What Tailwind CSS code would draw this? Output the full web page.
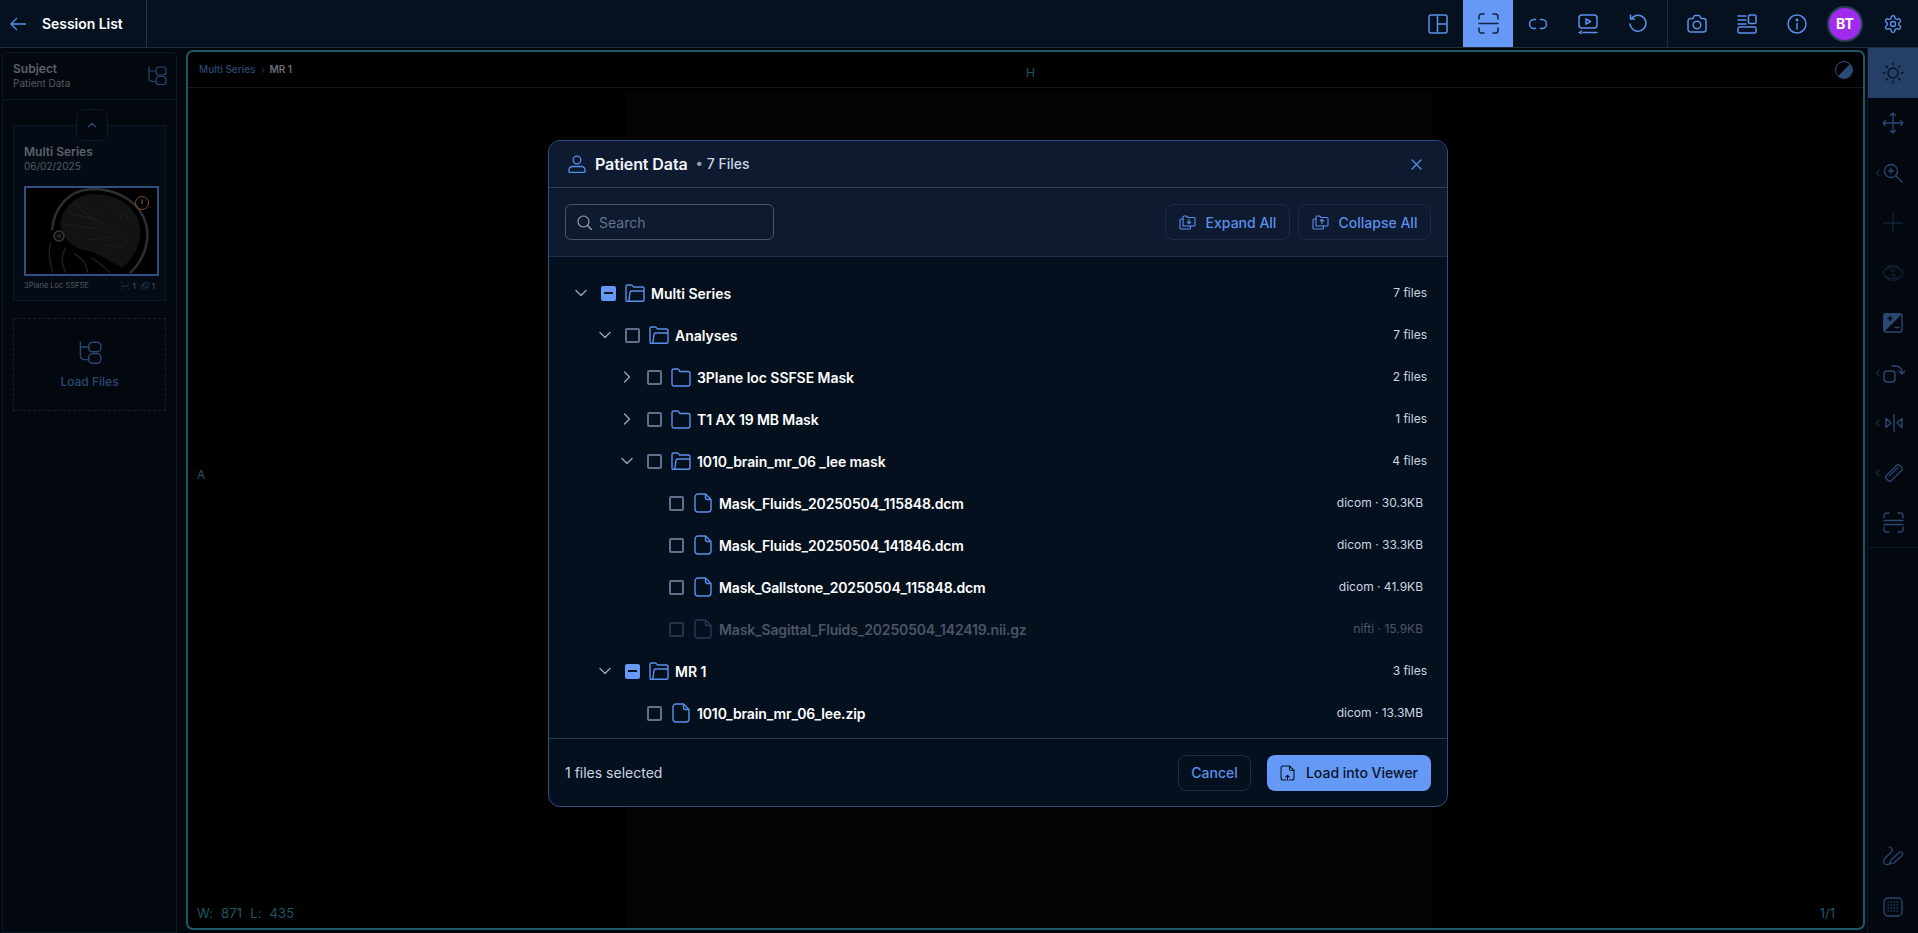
<!DOCTYPE html>
<html lang="en">
<head>
<meta charset="UTF-8" />
<title>Viewer</title>
<script src="https://cdn.jsdelivr.net/npm/@tailwindcss/browser@4"></script>
</head>
<body class="bg-black w-[1918px] h-[933px] overflow-hidden relative font-['Inter',sans-serif]">

<!-- icon sprite -->
<svg class="hidden">
  <symbol id="folder-open" viewBox="0 0 20 20" fill="none" stroke="currentColor" stroke-width="1.400" stroke-linejoin="round" stroke-linecap="round">
    <path d="M1 17V3.500A1.500 1.500 0 0 1 2.500 2h3.800c.5 0 .8.2 1.100.6L8.600 4h8.900A1.500 1.500 0 0 1 19 5.500V8"/>
    <path d="M1.200 18.200h16.300a1.500 1.500 0 0 0 1.500-1.500V9.500A1.500 1.500 0 0 0 17.500 8H6.500a1.500 1.500 0 0 0-1.500 1.300L4 16.800c-.2 1-1.300 1.400-2.800 1.400z"/>
  </symbol>
  <symbol id="folder" viewBox="0 0 20 20" fill="none" stroke="currentColor" stroke-width="1.400" stroke-linejoin="round">
    <path d="M1 4a2 2 0 0 1 2-2h3.500c.5 0 .9.2 1.200.6L9 4.500h8a2 2 0 0 1 2 2V17a2 2 0 0 1-2 2H3a2 2 0 0 1-2-2z"/>
  </symbol>
  <symbol id="file" viewBox="0 0 20 20" fill="none" stroke="currentColor" stroke-width="1.400" stroke-linejoin="round">
    <path d="M5 1h7.500L18 6.500V16a3 3 0 0 1-3 3H5a3 3 0 0 1-3-3V4a3 3 0 0 1 3-3z"/>
    <path d="M12.500 1v3.500a2 2 0 0 0 2 2H18"/>
  </symbol>
  <symbol id="chev-down" viewBox="0 0 20 20" fill="none" stroke="currentColor" stroke-width="1.400" stroke-linecap="round" stroke-linejoin="round"><path d="M5 7.500l5 5 5-5"/></symbol>
  <symbol id="chev-right" viewBox="0 0 20 20" fill="none" stroke="currentColor" stroke-width="1.400" stroke-linecap="round" stroke-linejoin="round"><path d="M7.500 5l5 5-5 5"/></symbol>
  <symbol id="chev-left" viewBox="0 0 8 12" fill="none" stroke="currentColor" stroke-width="1" stroke-linecap="round" stroke-linejoin="round"><path d="M5.500 2L2 6l3.500 4"/></symbol>
  <symbol id="tree" viewBox="0 0 20 20" fill="none" stroke="currentColor" stroke-width="1.200" stroke-linecap="round" stroke-linejoin="round">
    <path d="M2 1v11.500a3 3 0 0 0 3 3h3M2 5h6"/>
    <rect x="9" y="1" width="10" height="8" rx="3"/>
    <rect x="9" y="10.500" width="10" height="8" rx="3"/>
  </symbol>
</svg>

<!-- top bar -->
<header class="h-[48px] bg-[#05111f] border-b border-[#1c2d42] flex items-center">
  <div class="w-[147px] h-full border-r border-[#1f3350] flex items-center pl-[10px] gap-[16px] shrink-0">
    <svg class="w-[16px] h-[14px] text-[#5a8fe8]" viewBox="0 0 16 14" fill="none" stroke="currentColor" stroke-width="1.300" stroke-linecap="round" stroke-linejoin="round"><path d="M15.500 7H1M6.500 1.500L1 7l5.500 5.500"/></svg>
    <span class="text-[14px] font-semibold text-white tracking-[-0.05px]">Session List</span>
  </div>
  <div class="flex-1"></div>
  <div class="flex items-center h-full text-[#5b8fe9]">
    <button class="w-[50px] h-full flex items-center justify-center">
      <svg class="w-[20px] h-[20px]" viewBox="0 0 20 20" fill="none" stroke="currentColor" stroke-width="1.500"><rect x="1" y="1" width="18" height="18" rx="2"/><path d="M9.500 1v18M9.500 10H19"/></svg>
    </button>
    <button class="w-[50px] h-full bg-[#6699f6] flex items-center justify-center text-[#10233f]">
      <svg class="w-[21px] h-[21px]" viewBox="0 0 21 21" fill="none" stroke="currentColor" stroke-width="1.500" stroke-linecap="round" stroke-linejoin="round"><path d="M1 6V3.500A2.500 2.500 0 0 1 3.500 1H6M15 1h2.500A2.500 2.500 0 0 1 20 3.500V6M20 15v2.500a2.500 2.500 0 0 1-2.500 2.500H15M6 20H3.500A2.500 2.500 0 0 1 1 17.500V15M1 10.500h19"/></svg>
    </button>
    <button class="w-[50px] h-full flex items-center justify-center">
      <svg class="w-[20px] h-[12px]" viewBox="0 0 20 12" fill="none" stroke="currentColor" stroke-width="1.500" stroke-linecap="round"><path d="M7.500 1.500H6a4.500 4.500 0 0 0 0 9h1.500M12.500 1.500H14a4.500 4.500 0 0 1 0 9h-1.500"/></svg>
    </button>
    <button class="w-[50px] h-full flex items-center justify-center">
      <svg class="w-[20px] h-[20px]" viewBox="0 0 20 20" fill="none" stroke="currentColor" stroke-width="1.500" stroke-linecap="round" stroke-linejoin="round"><rect x="1" y="1" width="18" height="13" rx="3"/><path d="M8 4.800v5.400l4.500-2.700zM5 18.500h14M1 18.500h1.500M3.500 17l-1.500 1.500L3.500 20"/></svg>
    </button>
    <button class="w-[50px] h-full flex items-center justify-center">
      <svg class="w-[20px] h-[20px]" viewBox="0 0 20 20" fill="none" stroke="currentColor" stroke-width="1.500" stroke-linecap="round" stroke-linejoin="round"><path d="M3.500 4.500A8 8 0 1 1 2 10"/><path d="M2.500 1v4h4"/></svg>
    </button>
    <div class="w-px h-full bg-[#1c2d42] ml-[4px] mr-[4px]"></div>
    <button class="w-[50px] h-full flex items-center justify-center">
      <svg class="w-[20px] h-[19px]" viewBox="0 0 20 19" fill="none" stroke="currentColor" stroke-width="1.500" stroke-linejoin="round"><path d="M1 7a2.500 2.500 0 0 1 2.500-2.500H6L7.500 1.500h5L14 4.500h2.500A2.500 2.500 0 0 1 19 7v8.500a2.500 2.500 0 0 1-2.500 2.500h-13A2.500 2.500 0 0 1 1 15.500z"/><circle cx="10" cy="11" r="3.800"/></svg>
    </button>
    <button class="w-[50px] h-full flex items-center justify-center">
      <svg class="w-[20px] h-[20px]" viewBox="0 0 20 20" fill="none" stroke="currentColor" stroke-width="1.500" stroke-linecap="round"><path d="M1 2h8M1 6h8M1 10h8"/><rect x="11.500" y="1" width="7.500" height="8.500" rx="1.500"/><rect x="1" y="13" width="18" height="6" rx="1.500"/></svg>
    </button>
    <button class="w-[50px] h-full flex items-center justify-center">
      <svg class="w-[20px] h-[20px]" viewBox="0 0 20 20" fill="none" stroke="currentColor" stroke-width="1.500" stroke-linecap="round"><circle cx="10" cy="10" r="9"/><path d="M10 9.500V15"/><circle cx="10" cy="6" r=".7" fill="currentColor"/></svg>
    </button>
    <div class="w-[36px] h-[36px] rounded-full bg-[#a12bea] border-[2px] border-[#2a3f5a] flex items-center justify-center ml-[5px] mr-[5px] text-white text-[14px] font-bold">BT</div>
    <button class="w-[50px] h-full flex items-center justify-center">
      <svg class="w-[20px] h-[20px]" viewBox="0 0 24 24" fill="none" stroke="currentColor" stroke-width="1.700" stroke-linecap="round" stroke-linejoin="round"><path d="M12.220 2h-.440a2 2 0 0 0-2 2v.180a2 2 0 0 1-1 1.730l-.430.250a2 2 0 0 1-2 0l-.150-.080a2 2 0 0 0-2.730.730l-.220.380a2 2 0 0 0 .730 2.730l.150.100a2 2 0 0 1 1 1.720v.510a2 2 0 0 1-1 1.740l-.150.090a2 2 0 0 0-.730 2.730l.220.380a2 2 0 0 0 2.730.730l.150-.080a2 2 0 0 1 2 0l.430.250a2 2 0 0 1 1 1.730V20a2 2 0 0 0 2 2h.440a2 2 0 0 0 2-2v-.180a2 2 0 0 1 1-1.730l.430-.250a2 2 0 0 1 2 0l.150.080a2 2 0 0 0 2.730-.730l.220-.390a2 2 0 0 0-.730-2.730l-.150-.080a2 2 0 0 1-1-1.740v-.500a2 2 0 0 1 1-1.740l.150-.090a2 2 0 0 0 .730-2.730l-.220-.380a2 2 0 0 0-2.730-.730l-.150.080a2 2 0 0 1-2 0l-.430-.250a2 2 0 0 1-1-1.730V4a2 2 0 0 0-2-2z"/><circle cx="12" cy="12" r="3"/></svg>
    </button>
  </div>
</header>

<main class="h-[885px] flex bg-[#02060d]">
  <!-- left panel -->
  <aside class="w-[186px] shrink-0 pl-[2px] pt-[4px] pr-[9px]">
    <div class="h-[881px] border border-[#0d1726] rounded-t-[4px] bg-[#03080f] flex flex-col">
      <div class="h-[47px] border-b border-[#0d1726] pl-[10px] pr-[9px] pb-[1px] flex items-center justify-between shrink-0">
        <div class="leading-none">
          <div class="text-[12px] font-semibold text-[#5c6169]">Subject</div>
          <div class="text-[10px] text-[#555a62] mt-[3px]">Patient Data</div>
        </div>
        <svg class="w-[20px] h-[20px] text-[#2b4874]"><use href="#tree"/></svg>
      </div>
      <div class="relative px-[10px] pt-[25px]">
        <!-- collapse handle -->
        <div class="absolute left-[73px] top-[9px] w-[32px] h-[32px] rounded-[8px] border border-[#0e1a2b] bg-[#03080f] flex items-center justify-center text-[#2b4874] z-10">
          <svg class="w-[14px] h-[14px]" viewBox="0 0 20 20" fill="none" stroke="currentColor" stroke-width="1.800" stroke-linecap="round" stroke-linejoin="round"><path d="M5 12.500l5-5 5 5"/></svg>
        </div>
        <div class="h-[176px] border border-[#0d1726] bg-[#050b15] px-[10px] pt-[19px]">
          <div class="text-[12px] font-semibold text-[#5c6169] leading-[14px]">Multi Series</div>
          <div class="text-[10px] text-[#555a62] leading-[14px]">06/02/2025</div>
          <!-- thumbnail -->
          <div class="relative mt-[13px] w-[135px] h-[90px] border-[2px] border-[#2f4f80] bg-black overflow-hidden">
            <svg class="w-full h-full" viewBox="0 0 131 86">
              <path d="M26 42C28 20 42 2 66 1c26 0 48 13 54 35 4 14 0 34-16 49" fill="none" stroke="#2f2f2f" stroke-width="2.500"/>
              <path d="M34 36C38 16 52 6 68 6c24 0 44 14 46 34 2 14-6 30-18 40-12-6-26-18-40-18-10-4-20-12-22-26z" fill="#131313"/>
              <path d="M42 24c10 6 20 2 30 10M38 36c12 0 20 6 34 4M50 14c4 12 16 14 30 24M62 52c8-2 16 0 22-4M84 14c6 8 14 12 22 18M78 56c8 2 16 6 24-2" stroke="#1c1c1c" stroke-width="1.200" fill="none"/>
              <path d="M60 20h.8M76 24h.8M94 30h.8M52 44h.8M88 44h.8M100 48h.8M70 48h.8M82 68h.8" stroke="#3c3c3c" stroke-width="1"/>
              <circle cx="33" cy="48" r="5" fill="#0c0c0c" stroke="#3a3a3a" stroke-width="1.500"/>
              <circle cx="33" cy="48" r="1.800" fill="#2e2e2e"/>
              <path d="M25 54c-3 8-2 18 2 31M40 60c-6 8-4 18 0 25M48 66c6 2 12 8 14 19M66 70c6 4 12 8 18 15" stroke="#1e1e1e" stroke-width="1.500" fill="none"/>
              <circle cx="116" cy="15" r="6.500" fill="none" stroke="#7d5520" stroke-width="1"/>
              <path d="M116 11.500v4.500M116 18v.6" stroke="#7d5520" stroke-width="1.200"/>
            </svg>
          </div>
          <div class="flex items-center justify-between mt-[4px] text-[7.500px] text-[#555a62] leading-[12px]">
            <span>3Plane Loc SSFSE</span>
            <span class="flex items-center gap-[3px] text-[8px]">
              <svg class="w-[8px] h-[8px] text-[#24395c]" viewBox="0 0 8 8" fill="none" stroke="currentColor" stroke-width=".8"><path d="M0 2V0h2M6 0h2v2M8 6v2H6M2 8H0V6M0 4h8"/></svg>
              <span class="mr-[2px]">1</span>
              <svg class="w-[8px] h-[8px] text-[#24395c]" viewBox="0 0 8 8" fill="none" stroke="currentColor" stroke-width=".8"><rect x=".5" y="2.500" width="5" height="5" rx="1"/><rect x="2.500" y=".5" width="5" height="5" rx="1"/></svg>
              <span>1</span>
            </span>
          </div>
        </div>
        <div class="mt-[17px] h-[93px] w-[153px] border border-dashed border-[#15202f] flex flex-col items-center pt-[22px]">
          <svg class="w-[24px] h-[24px] text-[#2b4874]"><use href="#tree"/></svg>
          <span class="text-[12px] font-medium text-[#2b4874] mt-[8px]">Load Files</span>
        </div>
      </div>
    </div>
  </aside>

  <!-- viewer -->
  <section class="relative w-[1679px] h-[880px] mt-[2px] border-[2px] border-[#1d5767] rounded-[7px] bg-black flex flex-col overflow-hidden">
    <div class="h-[36px] border-b border-[#15191f] flex items-center pl-[11px] text-[10px] shrink-0">
      <span class="text-[#2b4874] font-medium">Multi Series</span>
      <svg class="w-[10px] h-[10px] mx-[2px] text-[#444a52]"><use href="#chev-right"/></svg>
      <span class="text-[#6b6f75] font-semibold">MR 1</span>
    </div>
    <!-- faint image under the dialog -->
    <div class="absolute left-[438px] top-[40px] w-[806px] h-[840px] bg-[#040404]"></div>
    <span class="absolute left-[838px] top-[12px] text-[12px] text-[#1d5767]">H</span>
    <span class="absolute left-[9px] top-[414px] text-[12px] text-[#1d5767]">A</span>
    <svg class="absolute right-[10px] top-[9px] w-[18px] h-[18px]" viewBox="0 0 18 18"><circle cx="9" cy="9" r="8.500" fill="#2c4a78"/><path d="M3 15L15 3A8.500 8.500 0 0 0 3 15z" fill="#000"/><circle cx="9" cy="9" r="8.500" fill="none" stroke="#2c4a78"/></svg>
    <div class="absolute left-[9px] bottom-[5px] text-[13px] text-[#1d5767] tracking-[0.2px] flex gap-[8px]">
      <span>W:&nbsp; 871</span><span>L:&nbsp; 435</span>
    </div>
    <span class="absolute right-[28px] bottom-[5px] text-[13px] text-[#1d5767]">1/1</span>
  </section>

  <!-- right tools -->
  <aside class="flex-1 ml-[2px] border-l border-[#0d1726] bg-[#03080f] flex flex-col text-[#2b4874]">
    <button class="h-[50px] bg-[#263f66] flex items-center justify-center text-[#0a1424]">
      <svg class="w-[22px] h-[22px]" viewBox="0 0 22 22" fill="none" stroke="currentColor" stroke-width="1.400" stroke-linecap="round"><circle cx="11" cy="11" r="5"/><path d="M11 1v2M11 19v2M1 11h2M19 11h2M4 4l1.400 1.400M16.600 16.600L18 18M4 18l1.400-1.400M16.600 5.400L18 4"/></svg>
    </button>
    <button class="h-[50px] flex items-center justify-center">
      <svg class="w-[22px] h-[22px]" viewBox="0 0 22 22" fill="none" stroke="currentColor" stroke-width="1.300" stroke-linecap="round" stroke-linejoin="round"><path d="M11 1v20M1 11h20M8.500 3.500L11 1l2.500 2.500M8.500 18.500L11 21l2.500-2.500M3.500 8.500L1 11l2.500 2.500M18.500 8.500L21 11l-2.500 2.500"/></svg>
    </button>
    <button class="relative h-[50px] flex items-center justify-center">
      <svg class="absolute left-[7px] top-[20px] w-[6px] h-[10px] text-[#4a4f57]"><use href="#chev-left"/></svg>
      <svg class="w-[20px] h-[20px]" viewBox="0 0 20 20" fill="none" stroke="currentColor" stroke-width="1.300" stroke-linecap="round"><circle cx="8" cy="8" r="6.500"/><path d="M13 13l6 6M8 5.500v5M5.500 8h5"/></svg>
    </button>
    <button class="h-[50px] flex items-center justify-center text-[#142238]">
      <svg class="w-[20px] h-[20px]" viewBox="0 0 20 20" fill="none" stroke="currentColor" stroke-width="1.300" stroke-linecap="round"><path d="M10 0v20M0 10h20"/></svg>
    </button>
    <button class="h-[50px] flex items-center justify-center text-[#142238]">
      <svg class="w-[22px] h-[22px]" viewBox="0 0 22 22" fill="none" stroke="currentColor" stroke-width="1.200" stroke-linecap="round" stroke-linejoin="round"><path d="M5 5.500C7 3 15 3 17 5.500M5 16.500C7 19 15 19 17 16.500"/><ellipse cx="11" cy="11" rx="10" ry="5.500"/><path d="M13 9H9l1.500-1.500M9 13h4l-1.500 1.500"/></svg>
    </button>
    <button class="h-[50px] flex items-center justify-center">
      <svg class="w-[20px] h-[20px]" viewBox="0 0 20 20" fill="none" stroke="currentColor" stroke-width="1.400" stroke-linecap="round" stroke-linejoin="round"><rect x="1" y="1" width="18" height="18" rx="2"/><path d="M1 1h17L1 18z" fill="currentColor"/><path d="M5 5.500h4M7 3.500v4" stroke="#03080f"/><path d="M12 14.500h4"/></svg>
    </button>
    <button class="relative h-[50px] flex items-center justify-center">
      <svg class="absolute left-[7px] top-[20px] w-[6px] h-[10px] text-[#4a4f57]"><use href="#chev-left"/></svg>
      <svg class="w-[22px] h-[20px] ml-[2px]" viewBox="0 0 22 20" fill="none" stroke="currentColor" stroke-width="1.400" stroke-linecap="round" stroke-linejoin="round"><rect x="1" y="8" width="11" height="11" rx="3"/><path d="M9 3h4a6 6 0 0 1 6 6v2M16 8l3 3 3-3" /></svg>
    </button>
    <button class="relative h-[50px] flex items-center justify-center">
      <svg class="absolute left-[7px] top-[20px] w-[6px] h-[10px] text-[#4a4f57]"><use href="#chev-left"/></svg>
      <svg class="w-[18px] h-[18px] ml-[2px]" viewBox="0 0 18 18" fill="none" stroke="currentColor" stroke-width="1.400" stroke-linejoin="round"><path d="M9 0v18"/><path d="M1 4.500L6 9l-5 4.500zM17 4.500L12 9l5 4.500z"/></svg>
    </button>
    <button class="relative h-[50px] flex items-center justify-center">
      <svg class="absolute left-[7px] top-[20px] w-[6px] h-[10px] text-[#4a4f57]"><use href="#chev-left"/></svg>
      <svg class="w-[20px] h-[20px] ml-[2px]" viewBox="0 0 24 24" fill="none" stroke="currentColor" stroke-width="1.500" stroke-linecap="round" stroke-linejoin="round"><path d="M21.300 8.700L8.700 21.300c-1 1-2.500 1-3.400 0l-2.600-2.600c-1-1-1-2.500 0-3.400L15.300 2.700c1-1 2.500-1 3.400 0l2.600 2.600c1 1 1 2.500 0 3.400z"/><path d="M14.500 7.500l-2 2M11.500 10.500l-2 2M8.500 13.500l-2 2M16.500 5.500l-1 1"/></svg>
    </button>
    <button class="h-[50px] flex items-center justify-center border-b border-[#0d1726]">
      <svg class="w-[21px] h-[21px]" viewBox="0 0 21 21" fill="none" stroke="currentColor" stroke-width="1.300" stroke-linecap="round" stroke-linejoin="round"><path d="M1 6V3.500A2.500 2.500 0 0 1 3.500 1H6M15 1h2.500A2.500 2.500 0 0 1 20 3.500V6M20 15v2.500a2.500 2.500 0 0 1-2.500 2.500H15M6 20H3.500A2.500 2.500 0 0 1 1 17.500V15M1 8.500h19M1 12.500h19"/></svg>
    </button>
    <div class="flex-1"></div>
    <button class="h-[50px] flex items-center justify-center mt-[2px]">
      <svg class="w-[22px] h-[22px]" viewBox="0 0 22 22" fill="none" stroke="currentColor" stroke-width="1.200" stroke-linecap="round" stroke-linejoin="round"><path d="M7 1c3 0 4 2.500 2.500 5S2 11 1.500 15c-.4 3 2.500 5 6.500 2.500"/><path d="M8 18l1-4 8-7.500c1-1 2.500-1 3.300 0s.5 2-.3 3L12 17z"/></svg>
    </button>
    <button class="h-[50px] flex items-center justify-center mb-[1px]">
      <svg class="w-[20px] h-[20px]" viewBox="0 0 20 20" fill="none" stroke="currentColor" stroke-width="1.300"><rect x="1" y="1" width="18" height="18" rx="4"/><path d="M4.500 5h11M4.500 8h11M4.500 11h11M4.500 14h11" stroke-dasharray="1.400 1.600" opacity=".8"/></svg>
    </button>
  </aside>
</main>

<!-- dialog -->
<div class="absolute left-[548px] top-[140px] w-[900px] h-[667px] rounded-[12px] border border-[#2f4f84] bg-[#05101e] overflow-hidden flex flex-col">
  <div class="h-[47px] shrink-0 bg-[#0d1a30] border-b border-[#303d52] flex items-center px-[19px]">
    <svg class="w-[18px] h-[18px] text-[#5a8fe8]" viewBox="0 0 18 18" fill="none" stroke="currentColor" stroke-width="1.300" stroke-linecap="round" stroke-linejoin="round"><circle cx="9" cy="5" r="3.800"/><path d="M2 17.500h14c.5 0 1-.5 1-1V15a3.500 3.500 0 0 0-3.500-3.500h-9A3.500 3.500 0 0 0 1 15v1.500c0 .5.500 1 1 1z"/></svg>
    <span class="ml-[9px] text-[16px] font-semibold text-[#f1f5f9] leading-none tracking-[-0.1px]">Patient Data</span>
    <span class="ml-[8px] text-[14px] text-[#cbd5e1] leading-none font-medium"><span class="text-[#94a3b8]">•</span> 7 Files</span>
    <svg class="ml-auto mr-[6px] w-[11px] h-[11px] text-[#5a8fe8]" viewBox="0 0 11 11" fill="none" stroke="currentColor" stroke-width="1.300" stroke-linecap="round"><path d="M1 1l9 9M10 1l-9 9"/></svg>
  </div>
  <div class="h-[69px] shrink-0 bg-[#0d1a30] border-b border-[#1e2e48] flex items-center px-[16px]">
    <div class="w-[209px] h-[36px] rounded-[6px] border border-[#4a5567] flex items-center pl-[11px] gap-[7px]">
      <svg class="w-[15px] h-[15px] text-[#94a3b8]" viewBox="0 0 15 15" fill="none" stroke="currentColor" stroke-width="1.200" stroke-linecap="round"><circle cx="6.500" cy="6.500" r="5.500"/><path d="M10.500 10.500l4 4"/></svg>
      <span class="text-[14px] text-[#64748b]">Search</span>
    </div>
    <button class="ml-auto w-[125px] h-[36px] rounded-[8px] border border-[#1c2c46] flex items-center justify-center gap-[10px] text-[#5b8fe9] text-[14px] font-medium">
      <svg class="w-[17px] h-[16px]" viewBox="0 0 17 16" fill="none" stroke="currentColor" stroke-width="1.100" stroke-linecap="round" stroke-linejoin="round"><path d="M4 12V3a1 1 0 0 1 1-1h2.500l1.500 1.500h6a1 1 0 0 1 1 1V11a1 1 0 0 1-1 1z"/><path d="M4 5H2a1 1 0 0 0-1 1v7.500a1 1 0 0 0 1 1.500h8.500a1 1 0 0 0 1-1V12"/><path d="M10 5.500v4M8.300 8L10 9.700 11.700 8"/></svg>
      Expand All
    </button>
    <button class="ml-[8px] w-[133px] h-[36px] rounded-[8px] border border-[#1c2c46] flex items-center justify-center gap-[10px] text-[#5b8fe9] text-[14px] font-medium">
      <svg class="w-[17px] h-[16px]" viewBox="0 0 17 16" fill="none" stroke="currentColor" stroke-width="1.100" stroke-linecap="round" stroke-linejoin="round"><path d="M4 12V3a1 1 0 0 1 1-1h2.500l1.500 1.500h6a1 1 0 0 1 1 1V11a1 1 0 0 1-1 1z"/><path d="M4 5H2a1 1 0 0 0-1 1v7.500a1 1 0 0 0 1 1.500h8.500a1 1 0 0 0 1-1V12"/><path d="M10 9.500v-4M8.300 7L10 5.300 11.700 7"/></svg>
      Collapse All
    </button>
  </div>

  <!-- file tree -->
  <div class="h-[481px] shrink-0 pt-[15px] overflow-hidden text-[14px] font-semibold text-white">
    <div class="h-[42px] flex items-center pl-[22px] pr-[20px]">
      <svg class="w-[20px] h-[20px] text-[#94a3b8]"><use href="#chev-down"/></svg>
      <span class="ml-[10px] w-[15px] h-[15px] rounded-[2px] bg-[#6699f6] flex items-center justify-center"><span class="w-[9px] h-[2px] bg-[#0a1424]"></span></span>
      <svg class="ml-[9px] w-[20px] h-[20px] text-[#5b8fe9]"><use href="#folder-open"/></svg>
      <span class="ml-[6px]">Multi Series</span>
      <span class="ml-auto text-[12px] font-normal text-[#cbd5e1]">7 files</span>
    </div>
    <div class="h-[42px] flex items-center pl-[46px] pr-[20px]">
      <svg class="w-[20px] h-[20px] text-[#94a3b8]"><use href="#chev-down"/></svg>
      <span class="ml-[10px] w-[15px] h-[15px] rounded-[2px] border-2 border-[#5f708a]"></span>
      <svg class="ml-[9px] w-[20px] h-[20px] text-[#5b8fe9]"><use href="#folder-open"/></svg>
      <span class="ml-[6px]">Analyses</span>
      <span class="ml-auto text-[12px] font-normal text-[#cbd5e1]">7 files</span>
    </div>
    <div class="h-[42px] flex items-center pl-[68px] pr-[20px]">
      <svg class="w-[20px] h-[20px] text-[#94a3b8]"><use href="#chev-right"/></svg>
      <span class="ml-[10px] w-[15px] h-[15px] rounded-[2px] border-2 border-[#5f708a]"></span>
      <svg class="ml-[9px] w-[20px] h-[20px] text-[#5b8fe9]"><use href="#folder"/></svg>
      <span class="ml-[6px] tracking-[-0.05px]">3Plane loc SSFSE Mask</span>
      <span class="ml-auto text-[12px] font-normal text-[#cbd5e1]">2 files</span>
    </div>
    <div class="h-[42px] flex items-center pl-[68px] pr-[20px]">
      <svg class="w-[20px] h-[20px] text-[#94a3b8]"><use href="#chev-right"/></svg>
      <span class="ml-[10px] w-[15px] h-[15px] rounded-[2px] border-2 border-[#5f708a]"></span>
      <svg class="ml-[9px] w-[20px] h-[20px] text-[#5b8fe9]"><use href="#folder"/></svg>
      <span class="ml-[6px] tracking-[-0.1px]">T1 AX 19 MB Mask</span>
      <span class="ml-auto text-[12px] font-normal text-[#cbd5e1]">1 files</span>
    </div>
    <div class="h-[42px] flex items-center pl-[68px] pr-[20px]">
      <svg class="w-[20px] h-[20px] text-[#94a3b8]"><use href="#chev-down"/></svg>
      <span class="ml-[10px] w-[15px] h-[15px] rounded-[2px] border-2 border-[#5f708a]"></span>
      <svg class="ml-[9px] w-[20px] h-[20px] text-[#5b8fe9]"><use href="#folder-open"/></svg>
      <span class="ml-[6px] tracking-[-0.1px]">1010_brain_mr_06 _lee mask</span>
      <span class="ml-auto text-[12px] font-normal text-[#cbd5e1]">4 files</span>
    </div>
    <div class="h-[42px] flex items-center pl-[120px] pr-[24px]">
      <span class="w-[15px] h-[15px] rounded-[2px] border-2 border-[#5f708a]"></span>
      <svg class="ml-[9px] w-[20px] h-[20px] text-[#5b8fe9]"><use href="#file"/></svg>
      <span class="ml-[6px] tracking-[-0.15px]">Mask_Fluids_20250504_115848.dcm</span>
      <span class="ml-auto text-[12px] font-normal text-[#cbd5e1]">dicom · 30.3KB</span>
    </div>
    <div class="h-[42px] flex items-center pl-[120px] pr-[24px]">
      <span class="w-[15px] h-[15px] rounded-[2px] border-2 border-[#5f708a]"></span>
      <svg class="ml-[9px] w-[20px] h-[20px] text-[#5b8fe9]"><use href="#file"/></svg>
      <span class="ml-[6px] tracking-[-0.15px]">Mask_Fluids_20250504_141846.dcm</span>
      <span class="ml-auto text-[12px] font-normal text-[#cbd5e1]">dicom · 33.3KB</span>
    </div>
    <div class="h-[42px] flex items-center pl-[120px] pr-[24px]">
      <span class="w-[15px] h-[15px] rounded-[2px] border-2 border-[#5f708a]"></span>
      <svg class="ml-[9px] w-[20px] h-[20px] text-[#5b8fe9]"><use href="#file"/></svg>
      <span class="ml-[6px] tracking-[-0.15px]">Mask_Gallstone_20250504_115848.dcm</span>
      <span class="ml-auto text-[12px] font-normal text-[#cbd5e1]">dicom · 41.9KB</span>
    </div>
    <div class="h-[42px] flex items-center pl-[120px] pr-[24px] text-[#4b5563]">
      <span class="w-[15px] h-[15px] rounded-[2px] border-2 border-[#253347]"></span>
      <svg class="ml-[9px] w-[20px] h-[20px] text-[#24395c]"><use href="#file"/></svg>
      <span class="ml-[6px] tracking-[-0.15px]">Mask_Sagittal_Fluids_20250504_142419.nii.gz</span>
      <span class="ml-auto text-[12px] font-normal text-[#4b5563]">nifti · 15.9KB</span>
    </div>
    <div class="h-[42px] flex items-center pl-[46px] pr-[20px]">
      <svg class="w-[20px] h-[20px] text-[#94a3b8]"><use href="#chev-down"/></svg>
      <span class="ml-[10px] w-[15px] h-[15px] rounded-[2px] bg-[#6699f6] flex items-center justify-center"><span class="w-[9px] h-[2px] bg-[#0a1424]"></span></span>
      <svg class="ml-[9px] w-[20px] h-[20px] text-[#5b8fe9]"><use href="#folder-open"/></svg>
      <span class="ml-[6px]">MR 1</span>
      <span class="ml-auto text-[12px] font-normal text-[#cbd5e1]">3 files</span>
    </div>
    <div class="h-[42px] flex items-center pl-[98px] pr-[24px]">
      <span class="w-[15px] h-[15px] rounded-[2px] border-2 border-[#5f708a]"></span>
      <svg class="ml-[9px] w-[20px] h-[20px] text-[#5b8fe9]"><use href="#file"/></svg>
      <span class="ml-[6px] tracking-[-0.15px]">1010_brain_mr_06_lee.zip</span>
      <span class="ml-auto text-[12px] font-normal text-[#cbd5e1]">dicom · 13.3MB</span>
    </div>
  </div>

  <div class="flex-1 border-t border-[#27374e] flex items-center px-[16px]">
    <span class="text-[14px] text-[#cbd5e1]">1 files selected</span>
    <button class="ml-auto w-[73px] h-[36px] rounded-[8px] border border-[#1c2c46] text-[#5b8fe9] text-[14px] font-medium">Cancel</button>
    <button class="ml-[16px] w-[164px] h-[36px] rounded-[8px] bg-[#6699f6] text-[#081426] text-[14px] font-medium flex items-center justify-center gap-[11px]">
      <svg class="w-[15px] h-[16px]" viewBox="0 0 15 16" fill="none" stroke="currentColor" stroke-width="1.100" stroke-linecap="round" stroke-linejoin="round"><path d="M6 15H3a2 2 0 0 1-2-2V3a2 2 0 0 1 2-2h6.500L14 5.500V13a2 2 0 0 1-2 2H9"/><path d="M9.500 1v3a1.500 1.500 0 0 0 1.500 1.500h3M7.500 15v-4.500M5.800 12l1.700-1.700L9.200 12"/></svg>
      Load into Viewer
    </button>
  </div>
</div>
</body>
</html>
